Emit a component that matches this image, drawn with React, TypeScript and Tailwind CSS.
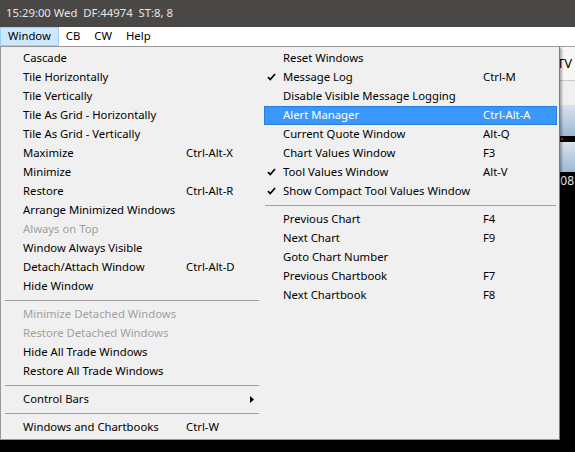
import React from "react";

type Item =
  | { kind: "item"; label: string; shortcut?: string; checked?: boolean; disabled?: boolean; highlighted?: boolean; submenu?: boolean }
  | { kind: "sep" };

const leftItems: Item[] = [
  { kind: "item", label: "Cascade" },
  { kind: "item", label: "Tile Horizontally" },
  { kind: "item", label: "Tile Vertically" },
  { kind: "item", label: "Tile As Grid - Horizontally" },
  { kind: "item", label: "Tile As Grid - Vertically" },
  { kind: "item", label: "Maximize", shortcut: "Ctrl-Alt-X" },
  { kind: "item", label: "Minimize" },
  { kind: "item", label: "Restore", shortcut: "Ctrl-Alt-R" },
  { kind: "item", label: "Arrange Minimized Windows" },
  { kind: "item", label: "Always on Top", disabled: true },
  { kind: "item", label: "Window Always Visible" },
  { kind: "item", label: "Detach/Attach Window", shortcut: "Ctrl-Alt-D" },
  { kind: "item", label: "Hide Window" },
  { kind: "sep" },
  { kind: "item", label: "Minimize Detached Windows", disabled: true },
  { kind: "item", label: "Restore Detached Windows", disabled: true },
  { kind: "item", label: "Hide All Trade Windows" },
  { kind: "item", label: "Restore All Trade Windows" },
  { kind: "sep" },
  { kind: "item", label: "Control Bars", submenu: true },
  { kind: "sep" },
  { kind: "item", label: "Windows and Chartbooks", shortcut: "Ctrl-W" },
];

const rightItems: Item[] = [
  { kind: "item", label: "Reset Windows" },
  { kind: "item", label: "Message Log", shortcut: "Ctrl-M", checked: true },
  { kind: "item", label: "Disable Visible Message Logging" },
  { kind: "item", label: "Alert Manager", shortcut: "Ctrl-Alt-A", highlighted: true },
  { kind: "item", label: "Current Quote Window", shortcut: "Alt-Q" },
  { kind: "item", label: "Chart Values Window", shortcut: "F3" },
  { kind: "item", label: "Tool Values Window", shortcut: "Alt-V", checked: true },
  { kind: "item", label: "Show Compact Tool Values Window", checked: true },
  { kind: "sep" },
  { kind: "item", label: "Previous Chart", shortcut: "F4" },
  { kind: "item", label: "Next Chart", shortcut: "F9" },
  { kind: "item", label: "Goto Chart Number" },
  { kind: "item", label: "Previous Chartbook", shortcut: "F7" },
  { kind: "item", label: "Next Chartbook", shortcut: "F8" },
];

function Check({ white }: { white?: boolean }) {
  return (
    <svg width="9" height="8" viewBox="0 0 9 8" className="block">
      <path d="M1 4.2 L3.3 6.6 L8 1" fill="none" stroke={white ? "#fff" : "#000"} strokeWidth="1.7" />
    </svg>
  );
}

function Column({ items, side }: { items: Item[]; side: "left" | "right" }) {
  const isLeft = side === "left";
  return (
    <div className={isLeft ? "flex flex-col w-[261px]" : "flex flex-col w-[296px]"}>
      {items.map((it, i) => {
        if (it.kind === "sep") {
          return (
            <div key={i} className={isLeft ? "h-[9px] flex items-center pl-[4px] pr-[3px]" : "h-[9px] flex items-center pl-[3px] pr-[2px]"}>
              <div className="h-px w-full bg-[#a0a0a0]" />
            </div>
          );
        }
        const color = it.highlighted ? "text-white" : it.disabled ? "text-[#a0a0a0]" : "text-black";
        return (
          <div
            key={i}
            className={
              (isLeft ? "h-[19px] pb-[2px] flex items-center relative " : "h-[19px] pb-[2px] flex items-center relative ml-[2px] mr-[1px] ") +
              (it.highlighted ? "bg-[#3a98fc] border border-[#2a7fdc] " : "border border-transparent ") +
              color
            }
          >
            <div className={isLeft ? "w-[21px] flex justify-center" : "w-[18px] flex justify-end pr-[7px] pt-[1px]"}>
              {it.checked ? <Check white={it.highlighted} /> : null}
            </div>
            <span className={isLeft ? "w-[163px] whitespace-nowrap" : "w-[200px] whitespace-nowrap"}>{it.label}</span>
            {it.shortcut ? <span className="whitespace-nowrap">{it.shortcut}</span> : null}
            {it.submenu ? (
              <svg width="4" height="7" viewBox="0 0 4 7" className="absolute left-[248px] top-[5px]">
                <path d="M0 0 L4 3.5 L0 7 Z" fill="#000" />
              </svg>
            ) : null}
          </div>
        );
      })}
    </div>
  );
}

export default function App() {
  return (
    <div
      className="w-[575px] h-[452px] bg-black overflow-hidden flex flex-col text-[11.3px] leading-none"
      style={{ fontFamily: '"Noto Sans", "Open Sans", sans-serif' }}
    >
      <div className="h-[27px] shrink-0 bg-[#4a4847] text-[#e6e6e6] flex items-center pl-[6px] pb-[2px] whitespace-pre">
        15:29:00 Wed  DF:44974  ST:8, 8
      </div>
      <div className="h-[19px] shrink-0 bg-white flex items-stretch text-black">
        <div className="px-[7px] pb-[2px] flex items-center bg-[#cce8ff] border border-[#99d1ff]">Window</div>
        <div className="px-[7px] pb-[2px] flex items-center">CB</div>
        <div className="px-[7px] pb-[2px] flex items-center">CW</div>
        <div className="px-[7px] pb-[2px] flex items-center">Help</div>
      </div>
      <div className="relative flex-1 flex flex-col">
        {/* background application content, mostly covered by the menu */}
        <div className="h-px bg-[#a0a0a0]" />
        <div className="h-[34px] bg-[#f7f7f7] flex items-center justify-end pr-[3px] text-black border-b border-[#c8c8c8]">
          <span className="text-[13px]">TV</span>
        </div>
        <div className="h-[24px] bg-[#f0f0f0]" />
        <div className="h-[31px] bg-gradient-to-b from-[#d8e3f0] to-[#9fb7d3]" />
        <div className="h-[6px] bg-black flex justify-end pr-[12px]">
          <div className="w-[2px] h-[2px] bg-[#c02020] mt-[2px]" />
        </div>
        <div className="h-[30px] bg-gradient-to-b from-[#d8e3f0] to-[#9fb7d3]" />
        <div className="flex justify-end pt-[3px] pr-[1px] text-[#e6e6e6] text-[12px]">0:08</div>

        {/* dropdown menu */}
        <div className="absolute left-0 top-0 w-[560px] bg-[#f0f0f0] border border-[#979797] border-r-[#7a7a7a] py-[2px] flex shadow-[2px_2px_2px_rgba(0,0,0,0.3)]">
          <Column items={leftItems} side="left" />
          <Column items={rightItems} side="right" />
        </div>
      </div>
    </div>
  );
}
